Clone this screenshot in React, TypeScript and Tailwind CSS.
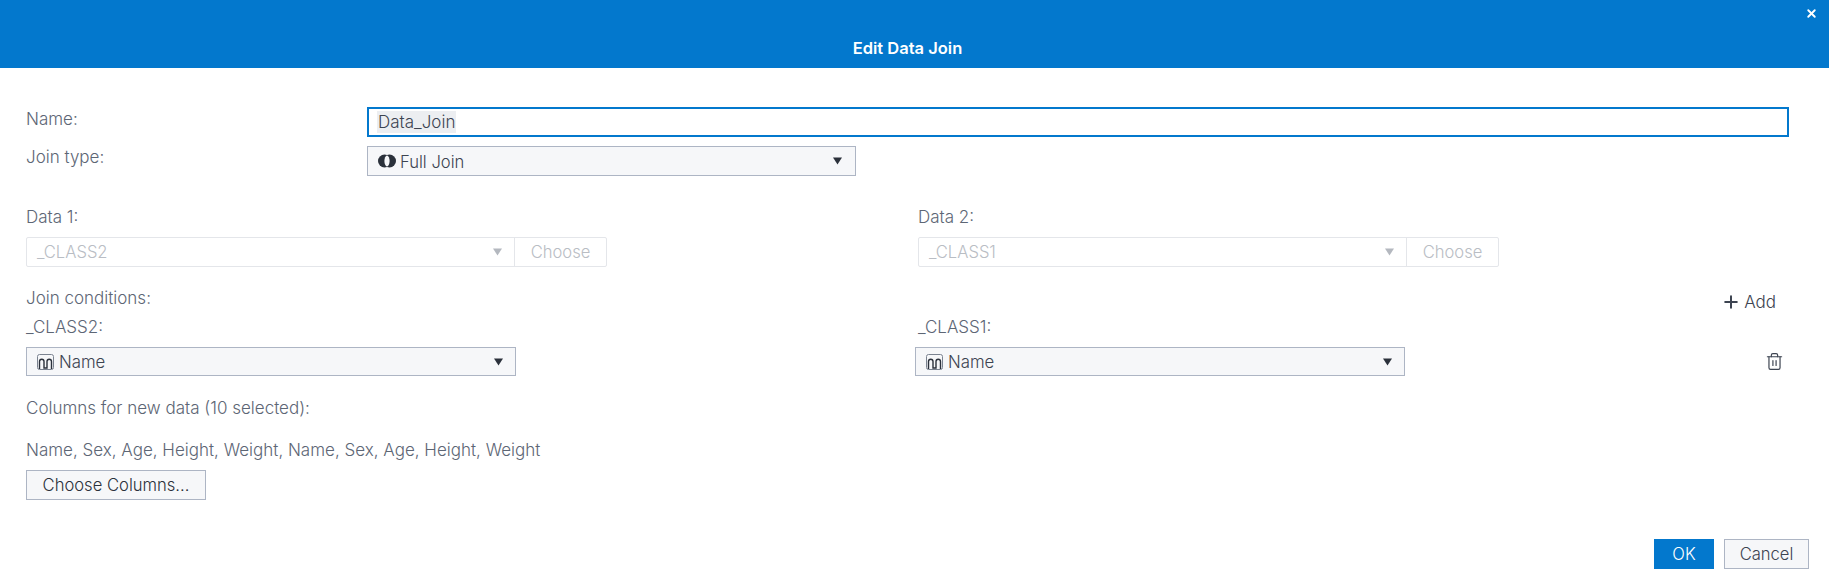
import { Plus, Trash2, X } from "lucide-react";

function Caret({ disabled }: { disabled?: boolean }) {
  return (
    <svg width="9" height="8" viewBox="0 0 9 8" className={disabled ? "text-[#b4b8bf]" : "text-[#2b313b]"}>
      <path d="M0 0.5h9L4.5 7.5z" fill="currentColor" />
    </svg>
  );
}

function JoinIcon() {
  return (
    <svg width="18" height="14" viewBox="0 0 18 14" className="text-[#2b313b]">
      <circle cx="6.5" cy="7" r="6.5" fill="currentColor" />
      <circle cx="11.5" cy="7" r="6.5" fill="currentColor" />
      <ellipse cx="9" cy="7" rx="2.6" ry="5.4" fill="#f6f7f9" />
    </svg>
  );
}

function ColumnIcon() {
  return (
    <svg width="17" height="16" viewBox="0 0 17 16" fill="none" className="text-[#2b313b]">
      <rect x="0.5" y="0.5" width="16" height="15" rx="2" stroke="#7b8390" />
      <path
        d="M2.5 15V7.5C2.5 4.5 7 4.5 7 7.5V14H10V7.5C10 4.5 14.5 4.5 14.5 7.5V15"
        stroke="currentColor"
        strokeWidth="1.4"
      />
    </svg>
  );
}

function ColumnSelect({ className }: { className: string }) {
  return (
    <div className={`flex h-[29px] w-[490px] items-center border border-[#adb5c4] bg-[#f6f7f9] pl-[10px] pr-[12px] text-[16.8px] text-[#3d4451] ${className}`}>
      <ColumnIcon />
      <span className="ml-[5px] flex-1 pt-[1px]">Name</span>
      <Caret />
    </div>
  );
}

function DataPicker({ value }: { value: string }) {
  return (
    <div className="flex h-[30px] w-[581px] rounded-[2px] border border-[#e4e6ea] text-[16.6px] text-[#b9bdc4]">
      <div className="flex flex-1 items-center border-r border-[#e4e6ea] pl-[10px] pr-[12px]">
        <span className="flex-1">{value}</span>
        <Caret disabled />
      </div>
      <div className="flex w-[91px] items-center justify-center">Choose</div>
    </div>
  );
}

export default function App() {
  return (
    <div className="flex h-[582px] w-[1829px] flex-col overflow-hidden bg-white font-['Inter','Liberation_Sans',sans-serif] text-[17px] font-light leading-[20px] text-[#5d6675]">
      <div className="relative flex h-[68px] items-end justify-center bg-[#0378cd] pb-[10px] pr-[14px] text-[16.5px] font-semibold text-white">
        Edit Data Join
        <button className="absolute right-[11px] top-[7px] text-white">
          <X size={13} strokeWidth={3.5} />
        </button>
      </div>

      <div className="flex flex-1 flex-col pl-[26px] pr-[20px]">
        <div className="mt-[39px] flex h-[30px] pr-[20px]">
          <div className="w-[341px] pt-[2px]">Name:</div>
          <div className="flex flex-1 items-center border-2 border-[#0378cd] pl-[8px]">
            <span className="bg-[#eceef1] px-[1px] pt-[1px] leading-[21px] text-[#3d4451]">Data_Join</span>
          </div>
        </div>

        <div className="mt-[9px] flex h-[30px]">
          <div className="w-[341px] pt-[1px]">Join type:</div>
          <div className="flex w-[489px] items-center border border-[#adb5c4] bg-[#f6f7f9] pl-[10px] pr-[13px] text-[16.6px] text-[#3d4451]">
            <JoinIcon />
            <span className="ml-[4px] flex-1 pt-[1px]">Full Join</span>
            <Caret />
          </div>
        </div>

        <div className="mt-[31px] flex">
          <div className="w-[892px]">Data 1:</div>
          <div>Data 2:</div>
        </div>

        <div className="mt-[10px] flex">
          <div className="w-[892px]">
            <DataPicker value="_CLASS2" />
          </div>
          <DataPicker value="_CLASS1" />
        </div>

        <div className="mt-[21px] flex h-[20px] items-center pr-[33px]">
          <span className="flex-1">Join conditions:</span>
          <span className="flex translate-y-[4px] items-center gap-[3px] text-[#3d4451]">
            <Plus size={20} strokeWidth={2.4} />
            Add
          </span>
        </div>

        <div className="mt-[9px] flex h-[20px]">
          <div className="w-[892px]">_CLASS2:</div>
          <div>_CLASS1:</div>
        </div>

        <div className="mt-[10px] flex items-center">
          <ColumnSelect className="" />
          <ColumnSelect className="ml-[399px]" />
          <Trash2 size={19} strokeWidth={1.5} className="ml-[360px] text-[#3d4451]" />
        </div>

        <div className="mt-[22px]">Columns for new data (10 selected):</div>
        <div className="mt-[22px]">Name, Sex, Age, Height, Weight, Name, Sex, Age, Height, Weight</div>

        <button className="mt-[10px] h-[30px] w-[180px] border border-[#adb5c4] bg-[#f6f7f9] text-[16.6px] text-[#2b313b]">
          Choose Columns...
        </button>

        <div className="mt-[39px] flex justify-end gap-[10px] text-[16.6px]">
          <button className="h-[30px] w-[60px] bg-[#0378cd] text-white">OK</button>
          <button className="h-[30px] w-[85px] border border-[#adb5c4] bg-[#f6f7f9] text-[#3d4451]">Cancel</button>
        </div>
      </div>
    </div>
  );
}
